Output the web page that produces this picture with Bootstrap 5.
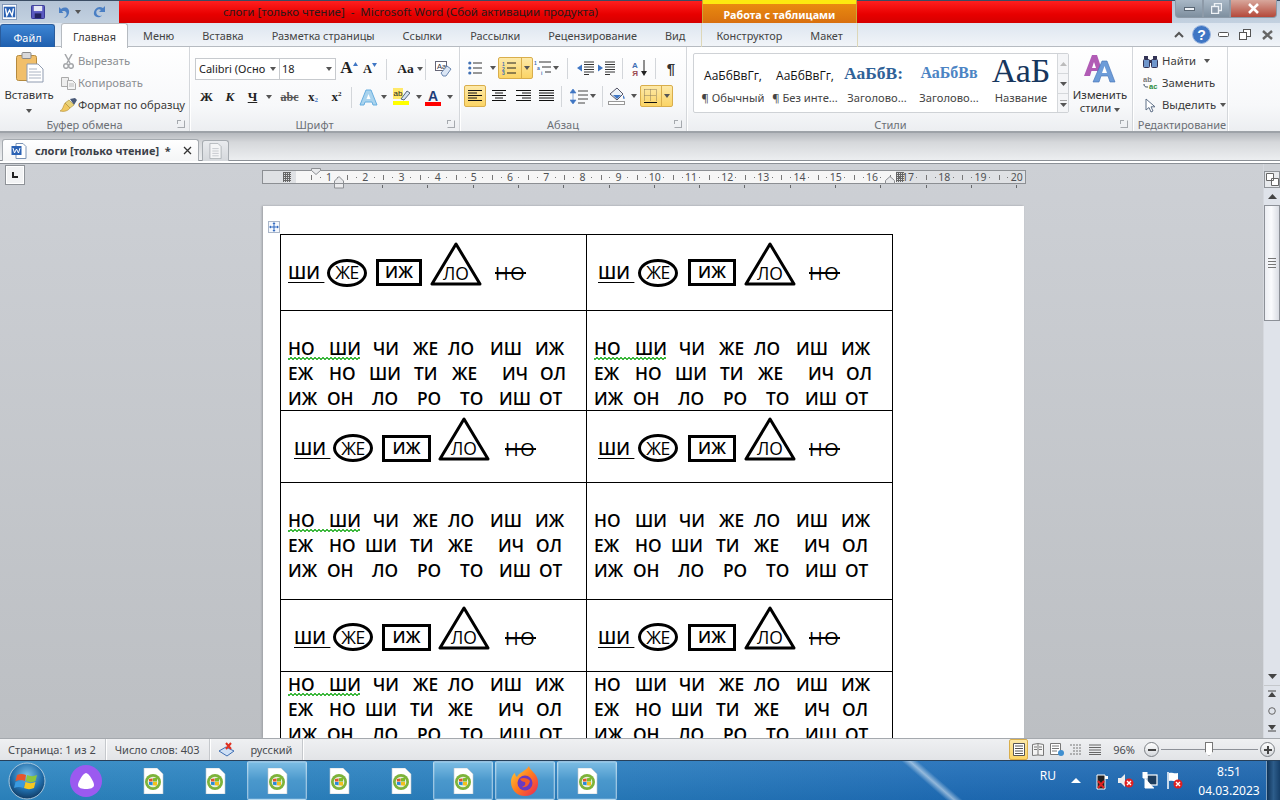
<!DOCTYPE html>
<html lang="ru">
<head>
<meta charset="utf-8">
<title>слоги [только чтение] - Microsoft Word</title>
<link href="https://cdn.jsdelivr.net/npm/bootstrap@5.3.0/dist/css/bootstrap.min.css" rel="stylesheet">
<style>
html,body{height:800px;overflow:hidden}
body{font:11.3px/1.2 "Noto Sans","Open Sans",sans-serif;color:#3b3b3b;background:#c9ccd1;width:1280px}
svg{display:block;flex:none}
.titlebar{height:23px;background:linear-gradient(#3a4c63 0 1px,#b3c3d6 1px,#c3d1e0);flex:none}
.qa{width:119px;gap:0}
.wbox{margin:1px 2px 0 2px}
.qsep{height:14px;background:#8c9aac;width:1px}
.redbar{background:linear-gradient(#ff1f1f,#e80000 60%,#d50000);height:22px;margin-top:1px;color:#2a1a1a;font-size:11.5px}
.redl{width:583px;text-align:center;line-height:22px;white-space:pre}
.redr{width:315px}
.ctx{width:155px;height:23px;background:linear-gradient(#fde910 0 4px,#e98a10 4px,#d86f0e);border-left:1px solid #c9a73a;border-right:1px solid #c9a73a;color:#fff;font-weight:700;font-size:10.8px;text-align:center;line-height:29px}
.winbtns{width:108px;padding:0 3px 0 3px}
.winbtns>div{height:18px;border:1px solid #8d9aa8;border-top:0;display:flex;align-items:center;justify-content:center}
.wmin{width:28px;border-radius:0 0 0 4px;background:linear-gradient(#a9b8c6,#7e8f9f)}
.wmax{width:27px;background:linear-gradient(#a9b8c6,#7e8f9f)}
.wcl{width:47px;border-radius:0 0 4px 0;background:linear-gradient(#d8a79c,#b4493a)}
.tabsrow{height:24px;background:linear-gradient(#dde6f0,#f1f4f8);border-bottom:1px solid #b6bbc1;flex:none}
.rnav{flex-wrap:nowrap}
.rnav .nav-link{padding:0 14px;height:24px;line-height:26px;color:#444;font-size:10.9px;white-space:nowrap;border:0}
.rnav .nav-link.filetab{background:linear-gradient(#3d85d4,#1f5fae);color:#fff;width:55px;padding:0;text-align:center;border-radius:3px 3px 0 0;margin-right:6px;height:23px;margin-top:1px;border:1px solid #2a5c9c;border-bottom:0}
.rnav .nav-link.hometab{background:#fff;border:1px solid #b6bbc1;border-bottom:0;border-radius:3px 3px 0 0;width:67px;padding:0;text-align:center;height:25px;margin-right:1px;color:#3b3b3b;position:relative}
.rnav .nav-link.ctxfirst{margin-left:2px;border-left:1px solid #ddd7b8;padding-left:14px}
.rnav .nav-link.ctxlast{border-right:1px solid #ddd7b8}
.rightctl{gap:0;padding-right:2px}
.rightctl>div{width:22px;display:flex;justify-content:center;align-items:center}
.ribbon{height:86px;background:linear-gradient(#fff,#f7f8fa 70%,#eceef1);border-bottom:2px solid #9da2a8;flex:none}
.rg{border-right:1px solid #d4d7db;box-shadow:1px 0 0 #fff;height:84px;position:relative;flex:none;display:flex;flex-direction:column}
.rb{height:70px;flex:none}
.rl{text-align:center;color:#6b6f75;line-height:14px;font-size:11px;margin-top:1px;padding-right:20px}
.rl2{margin-left:-18px;padding-right:20px}
.rl3{padding-right:0;margin-left:4px}
.launch{position:absolute;right:4px;bottom:3px;width:8px;height:8px;border:1px solid #a5a9ae;border-top-color:transparent;border-left-color:transparent}
.launch:before{content:"";position:absolute;left:-1px;top:-1px;width:4px;height:4px;border:1px solid #a5a9ae;border-right:0;border-bottom:0}
.g1{width:190px}.g2{width:270px}.g3{width:227px}.g4{width:446px}.g5{width:95px}
.paste{width:58px;text-align:center;padding-top:5px;color:#333}
.paste svg{margin:0 auto 5px 16px}
.drop{width:0;height:0;border:3px solid transparent;border-top:4px solid #555;border-bottom:0;display:inline-block;flex:none}
.smallcol{padding-top:3px}
.smi{height:22px;display:flex;align-items:center;white-space:nowrap}
.smi .ic{width:20px;display:flex;justify-content:center;flex:none}
.muted{color:#8c8f93}
.combo{height:22px;background:#fff;border:1px solid #c7cace;display:flex;align-items:center;padding:0 3px;justify-content:space-between;font-size:11px;color:#222;white-space:nowrap;overflow:hidden}
.gridrow{display:grid;align-items:center;justify-items:center}
.gridrow>div{display:flex;align-items:center;justify-content:center;gap:5px;height:22px}
.fr1{grid-template-columns:85px 56px 5px 16px 5px 16px 8px 1px 8px 30px 1px 9px 18px;margin:11px 0 6px 5px}
.fr2{grid-template-columns:23px 24px 36px 23px 24px 23px 6px 38px 30px 34px;margin-left:5px}
.fr1>.combo{justify-self:stretch;justify-content:space-between;gap:0}
.vs{width:1px;height:21px;background:#d3d6da}
.gridrow>.vs{height:21px}
.ser{font-family:"Liberation Serif",serif;color:#222;font-weight:700}
.pr1{grid-template-columns:33px 35px 26px 16px 20px 22px 10px 23px 10px 22px;margin:10px 0 6px 5px}
.pr2{grid-template-columns:22px 26px 23px 22px 8px 35px 5px 35px 33px;margin-left:4px}
.on{background:linear-gradient(#fde9a8,#fbd465);border:1px solid #d9ae4c;border-radius:2px}
.gridrow>.on{height:22px}
.splitd{border-left:1px solid #d9ae4c;height:100%;width:11px;display:flex;align-items:center;justify-content:center}
.gal{width:376px;height:60px;margin:6px 0 0 6px;background:#fff;border:1px solid #cfd2d6;border-radius:2px;padding-left:3px;overflow:hidden;flex:none}
.sty{width:72px;text-align:center;flex:none;overflow:hidden}
.sprev{height:34px;display:flex;align-items:center;justify-content:center;white-space:nowrap;overflow:hidden;color:#111;font:12px "Open Sans",sans-serif;padding-top:8px}
.sname{line-height:15px;white-space:nowrap;font-size:11.2px;color:#444;margin-top:2px}
.s3{font:700 17.5px "Liberation Serif",serif;color:#2f6298;padding-top:4px;justify-content:flex-start;padding-left:3px}
.s4{font:700 16px "Liberation Serif",serif;color:#4c84c4;padding-top:4px}
.s5{font:34px/1 "Liberation Serif",serif;color:#17365d;padding-top:0;overflow:visible}
.gscr{width:14px;margin-left:auto;background:#f4f5f7;border-left:1px solid #d5d8db}
.gscr>div{height:20px;display:flex;align-items:center;justify-content:center;border-bottom:1px solid #d5d8db}
.chg{width:62px;text-align:center;padding-top:8px;color:#333}
.chg svg{margin:0 auto 5px}
.doctabs{height:28px;background:linear-gradient(#b6b9be,#d6d8db 35%,#eceef0);padding:6px 0 0 2px;flex:none;border-bottom:1px solid #8c9197}
.dtab{width:197px;height:22px;background:linear-gradient(#fff,#f4f5f6);border:1px solid #a6abb0;border-bottom:0;border-radius:3px 3px 0 0;font-weight:700;font-size:11px;color:#3b4048;padding:0 6px 0 8px}
.dnew{width:27px;height:21px;margin:1px 0 0 3px;background:linear-gradient(#e9ebee,#d5d8dc);border:1px solid #a6abb0;border-bottom:0;border-radius:3px 3px 0 0}
.topline{height:3px;background:#fff;border-bottom:1px solid #8c9197;flex:none}
.work{min-height:0;background:linear-gradient(#cdd0d5,#bcbfc3);overflow:hidden}
.view{width:1263px;overflow:hidden;flex:none}
.rulerrow{height:24px;padding-top:6px;flex:none}
.tabsel{width:20px;height:20px;margin:-5px 0 0 5px;background:#f2f3f4;border:1px solid #8f9398;box-shadow:inset 0 0 0 1px #fff;flex:none}
.tabsel i{display:block;width:6px;height:6px;border-left:2px solid #222;border-bottom:2px solid #222;margin:6px 0 0 6px}
.rwrap{margin-left:237px;width:764px;position:relative;height:18px;flex:none}
.rwrap:after{content:"";position:absolute;left:0;right:0;top:15px;height:3px;background:repeating-linear-gradient(90deg,transparent 0 30px,#66686b 30px 31px,transparent 31px 45.3px) 90px 0}
.ruler{height:14px;width:764px;background:linear-gradient(#dfe1e4,#dfe1e4) 0 0/33px 100% no-repeat,linear-gradient(#dfe1e4,#dfe1e4) 633px 0/131px 100% no-repeat,#f6f6f6;border:1px solid #8c8f93;display:flex;padding-left:48px;overflow:hidden;position:relative;z-index:1}
.rn{width:36.2px;flex:none;text-align:center;line-height:12px;font-size:10.5px;color:#4f5155;background:linear-gradient(#777,#777) 0 50%/1px 5px no-repeat,linear-gradient(#777,#777) 25% 50%/1px 1px no-repeat,linear-gradient(#777,#777) 75% 50%/1px 1px no-repeat}
.ind{position:absolute;z-index:2}
.hatch{position:absolute;z-index:2;top:2px;width:8px;height:10px;background:repeating-linear-gradient(90deg,#666 0 1px,transparent 1px 2px),repeating-linear-gradient(#666 0 1px,transparent 1px 2px)}
.page{margin:18px 0 0 263px;width:761px;height:532px;background:#fff;padding:28px 0 0 17px;position:relative;overflow:hidden;box-shadow:-1px 0 2px #9a9da1;flex:none}
.mvh{position:absolute;left:5px;top:15px;width:12px;height:12px;border:1px solid #aab6c8;background:#f5f8fd;display:flex;align-items:center;justify-content:center}
.sheet{width:613px;table-layout:fixed;border-collapse:collapse;font:600 17.3px/25px "Open Sans",sans-serif;color:#000}
.sheet td{border:1px solid #000;padding:0;vertical-align:top;overflow:hidden}
.sheet td.p25{padding-top:25px}
.sheet td.p25 .l3{margin-bottom:-1px}
.sheet col{width:306px}
.sh1{height:76px}.sh2{height:100px}.sh3{height:72px}.sh4{height:117px}.sh5{height:72px}.sh6{height:80px}
.sym{display:grid;align-items:center;justify-items:start;height:100%}
.sh1 .sym{height:75px}
.sh3 .sym,.sh5 .sym{height:71px;padding-top:3px}
.va{grid-template-columns:39px 49px 54px 65px auto;padding-left:7px}
.vb{grid-template-columns:40px 50px 56px 65px auto;padding-left:11px}
.vc{grid-template-columns:39px 49px 56px 67px auto;padding-left:13px}
.sym u{text-underline-offset:3px;text-decoration-thickness:1px;white-space:pre}
.oval{width:40px;height:28px;border:3px solid #000;border-radius:50%;display:flex;align-items:center;justify-content:center;font-weight:500;font-size:17.5px;letter-spacing:-.4px}
.bx{height:27px;border:3px solid #000;display:flex;align-items:center;justify-content:center;font-size:16.5px;font-weight:600;line-height:1}
.va .bx{width:46px}.vb .bx{width:48px}.vc .bx{width:49px}
.tri{margin-bottom:18px;width:52px;height:44px}
.tri text{font:500 17.5px "Open Sans",sans-serif}
.sym s{font-weight:500;text-decoration-thickness:2px;font-size:18.5px;letter-spacing:1.5px}
.syl{display:grid;justify-items:start;white-space:nowrap;padding-left:7px;position:relative}
.l1{grid-template-columns:41px 44px 40px 35px 42px 45px auto}
.l2{grid-template-columns:41px 40px 45px 38px 50px 38px auto}
.l2b{grid-template-columns:41px 36px 45px 38px 50px 38px auto}
.l3{grid-template-columns:39px 45px 45px 43px 39px 40px auto}
.wavy:after{content:"";position:absolute;left:7px;top:21px;width:72px;height:3px;background:linear-gradient(135deg,transparent 40%,#3eb83e 40% 60%,transparent 60%) 0 0/4px 3px,linear-gradient(45deg,transparent 40%,#3eb83e 40% 60%,transparent 60%) 2px 0/4px 3px}
.vscroll{width:17px;background:#dfe3ea;flex:none;border-left:1px solid #d5d8de;padding-bottom:2px}
.vruler{height:24px;padding-top:7px;background:#cdd0d5;flex:none}
.vbtn{width:16px;height:17px;border:1px solid #8f9398;background:#e8eaed;display:flex;align-items:center;justify-content:center}
.varr{height:17px;display:flex;align-items:center;justify-content:center;flex:none}
.thumb{height:116px;width:16px;background:linear-gradient(90deg,#eceef3,#fafbfd 45%,#d9dce3);border:1px solid #8d9198;display:flex;flex-direction:column;align-items:center;justify-content:center;gap:2px;flex:none}
.thumb i{display:block;width:8px;height:1px;background:#777}
.status{height:22px;background:linear-gradient(#eff0f2,#e2e4e7);border-top:1px solid #a5a9ae;flex:none;color:#474a4f;font-size:11px}
.st{padding:0 9px;border-right:1px solid #c5c8cc;height:100%;display:flex;align-items:center;box-shadow:1px 0 0 #fff;white-space:nowrap;flex:none}
.st1{padding-left:8px}
.st3{width:93px;padding-left:8px}
.zm{padding-right:5px;flex:none}
.vw{width:19px;height:21px;display:flex;align-items:center;justify-content:center;flex:none}
.pct{width:23px;text-align:right;margin:0 9px 0 8px;flex:none}
.slider{width:97px;height:1px;background:#8d9198;position:relative;flex:none;margin:0 2px}
.slider i{position:absolute;left:44px;top:-7px;width:8px;height:14px;background:#fff;border:1px solid #777;clip-path:polygon(0 0,100% 0,100% 70%,50% 100%,0 70%)}
.zbtn{width:15px;height:15px;border:1px solid #7c8085;border-radius:50%;background:linear-gradient(#fff,#d5d8dc);position:relative;flex:none}
.zbtn:before{content:"";position:absolute;left:2.5px;right:2.5px;top:5.5px;height:2px;background:#444}
.zplus:after{content:"";position:absolute;top:2.5px;bottom:2.5px;left:5.5px;width:2px;background:#444}
.taskbar{height:40px;border-top:1px solid #27405a;background:linear-gradient(41deg,transparent 44%,rgba(255,255,255,.5) 50%,transparent 56%) 885px 0/95px 40px no-repeat,linear-gradient(rgba(255,255,255,.08),rgba(0,0,0,.05)),linear-gradient(90deg,#2c86c2,#2a80c0 40%,#1e6db8 75%,#1c65ae);color:#fff;flex:none}
.orb{width:52px;padding-left:8px;flex:none}
.tk{width:62px;height:39px;display:flex;align-items:center;justify-content:center;flex:none}
.alice{width:68px;margin-right:2px}
.tk.act{background:linear-gradient(#7dbde4,#4a98cc 50%,#3f8dc6);border:1px solid rgba(255,255,255,.45);border-radius:2px;box-shadow:inset 0 0 0 1px rgba(255,255,255,.15)}
.tka{width:60px;margin:0 1px}
.tray{margin-left:auto;height:39px}
.ru{font-size:12px;margin:0 15px 8px 0}
.up{margin-right:13px}
.clock{width:74px;text-align:center;font:12px/19px "Noto Sans",sans-serif}
.showd{width:14px;height:39px;background:linear-gradient(90deg,#0f3358,#2d5d8b 50%,#163f69);border-left:1px solid #7fa0bf}
</style>
</head>
<body class="d-flex flex-column">
<svg width="0" height="0" class="position-absolute">
<defs>
<symbol id="tdoc" viewBox="0 0 24 26"><path d="M3 0h13l6 6v20H3z" fill="#fff" stroke="#bcc6cc" stroke-width=".6"/><circle cx="12" cy="14" r="8" fill="#7db33a"/><circle cx="12" cy="14" r="5.3" fill="#e8efe0"/><path d="M8 11l3.6-.6v3.2H8z" fill="#e2562a"/><path d="M12 10.3l4-.6v3.9h-4z" fill="#7cba2a"/><path d="M8 14h3.6v3.2L8 16.7z" fill="#2a8ad8"/><path d="M12 14h4v3.8l-4-.6z" fill="#f4c01e"/></symbol>
<symbol id="ldoc" viewBox="0 0 16 20"><path d="M1 .5h10l4 4v15H1z" fill="#f4f5f6" stroke="#a6abb0"/><path d="M4 7h8M4 10h8M4 13h8M4 16h8" stroke="#bcc0c5"/></symbol>
<symbol id="triangle" viewBox="0 0 52 44"><path d="M26 2L2 42h48z" fill="none" stroke="#000" stroke-width="3" stroke-linejoin="round"/></symbol>
</defs>
</svg>

<header class="titlebar d-flex">
  <div class="qa d-flex align-items-center">
    <svg class="wbox" width="15" height="16" viewBox="0 0 17 18"><rect x=".5" y=".5" width="16" height="17" fill="#fff" stroke="#7b93b5"/><rect x="2" y="3" width="13" height="12" fill="#2b62b4"/><path d="M4 5l1.500 8 3-6 3 6L13 5" fill="none" stroke="#fff" stroke-width="1.600"/></svg>
    <div class="qsep ms-1 me-2"></div>
    <svg width="14" height="14" viewBox="0 0 15 15" class="me-2"><rect x=".5" y=".5" width="14" height="14" rx="1" fill="#5a5ac0" stroke="#323290"/><rect x="3" y="1" width="9" height="5.500" fill="#e6e8f4"/><rect x="4" y="9" width="7" height="5" fill="#23235e"/></svg>
    <svg width="14" height="14" viewBox="0 0 14 14" class="ms-1"><path d="M2 8V2l2 2c4-3 9-1 8 4-.5 3-3 5-5 5 2-1.500 3-3 2.500-5-.6-2-3-2.500-4.500-1.500L6.500 8z" fill="#4a7fc4"/></svg>
    <span class="drop ms-1 me-2"></span>
    <svg width="14" height="14" viewBox="0 0 14 14" class="ms-1"><path d="M12 1v6H6l2-2C5 3 2.500 6 3.500 8.500 4 10.500 6.500 11.500 9 10.500 7 13 2.500 13 1 9.500 0 5 5-.5 10 3z" fill="#4a7fc4"/></svg>
    <div class="qsep ms-2"></div>
    <div class="ms-2"><div style="width:7px;height:1px;background:#222;margin-bottom:2px"></div><span class="drop d-block"></span></div>
  </div>
  <div class="redbar redl">слоги [только чтение]  -  Microsoft Word (Сбой активации продукта)</div>
  <div class="ctx">Работа с таблицами</div>
  <div class="redbar redr"></div>
  <div class="winbtns d-flex">
    <div class="wmin"><svg width="11" height="4"><rect x=".5" y=".5" width="10" height="3" fill="#eef2f6" stroke="#5a6774"/></svg></div>
    <div class="wmax"><svg width="11" height="11"><rect x="3.500" y=".5" width="7" height="7" fill="none" stroke="#eef2f6" stroke-width="1.400"/><rect x=".5" y="3.500" width="7" height="7" fill="#8c9aaa" stroke="#eef2f6" stroke-width="1.400"/></svg></div>
    <div class="wcl"><svg width="13" height="11" viewBox="0 0 13 11"><path d="M2 1l9 9M11 1l-9 9" stroke="#fff" stroke-width="2.600"/></svg></div>
  </div>
</header>

<div class="tabsrow d-flex justify-content-between">
  <ul class="nav rnav">
    <li class="nav-item"><a class="nav-link filetab" href="#">Файл</a></li>
    <li class="nav-item"><a class="nav-link hometab" href="#">Главная</a></li>
    <li class="nav-item"><a class="nav-link" href="#">Меню</a></li>
    <li class="nav-item"><a class="nav-link" href="#">Вставка</a></li>
    <li class="nav-item"><a class="nav-link" href="#">Разметка страницы</a></li>
    <li class="nav-item"><a class="nav-link" href="#">Ссылки</a></li>
    <li class="nav-item"><a class="nav-link" href="#">Рассылки</a></li>
    <li class="nav-item"><a class="nav-link" href="#">Рецензирование</a></li>
    <li class="nav-item"><a class="nav-link" href="#">Вид</a></li>
    <li class="nav-item"><a class="nav-link ctxfirst" href="#">Конструктор</a></li>
    <li class="nav-item"><a class="nav-link ctxlast" href="#">Макет</a></li>
  </ul>
  <div class="rightctl d-flex align-items-center">
    <div><svg width="10" height="7" viewBox="0 0 10 7"><path d="M1 6l4-4 4 4" fill="none" stroke="#555" stroke-width="2"/></svg></div>
    <div><svg width="19" height="19" viewBox="0 0 19 19"><circle cx="9.500" cy="9.500" r="9" fill="#3f76c4" stroke="#9db7de"/><text x="9.500" y="14.500" text-anchor="middle" fill="#fff" font-family="Liberation Sans" font-weight="700" font-size="14">?</text></svg></div>
    <div><svg width="11" height="5"><rect x=".5" y=".5" width="10" height="4" rx="1" fill="#fff" stroke="#555"/></svg></div>
    <div><svg width="12" height="11"><rect x="4.500" y=".5" width="7" height="7" fill="#fff" stroke="#555"/><rect x=".5" y="3.500" width="7" height="7" fill="#fff" stroke="#555"/></svg></div>
    <div><svg width="11" height="10" viewBox="0 0 11 10"><path d="M1 1l9 8M10 1L1 9" stroke="#666" stroke-width="2.400"/></svg></div>
  </div>
</div>

<section class="ribbon d-flex">
  <div class="rg g1">
    <div class="rb d-flex">
      <div class="paste">
        <svg width="28" height="31" viewBox="0 0 28 31"><rect x=".5" y="3.500" width="20" height="25" rx="2" fill="#f1bf6a" stroke="#b58a3e"/><rect x="6" y=".5" width="9" height="6" rx="1" fill="#d8d8da" stroke="#8b8b8b"/><path d="M11 12h11l5 5v13H11z" fill="#fff" stroke="#8f9bb0"/><path d="M13 17h8M13 20h12M13 23h12M13 26h12" stroke="#aab3c2"/></svg>
        <div>Вставить</div>
        <span class="drop"></span>
      </div>
      <div class="smallcol">
        <div class="smi muted"><span class="ic"><svg width="11" height="15" viewBox="0 0 11 15"><path d="M2 0l5 9M9 0L4 9" stroke="#a4a6a9" stroke-width="1.500"/><circle cx="3" cy="12" r="2.300" fill="none" stroke="#a4a6a9" stroke-width="1.500"/><circle cx="8" cy="12" r="2.300" fill="none" stroke="#a4a6a9" stroke-width="1.500"/></svg></span>Вырезать</div>
        <div class="smi muted"><span class="ic"><svg width="15" height="13" viewBox="0 0 15 13"><path d="M.5.5h7v9h-7z" fill="#eee" stroke="#aaa"/><path d="M6.500 3.500h5l3 3v6h-8z" fill="#f4f4f4" stroke="#aaa"/><path d="M8 7h5M8 9h5" stroke="#bbb"/></svg></span>Копировать</div>
        <div class="smi"><span class="ic"><svg width="17" height="14" viewBox="0 0 17 14"><path d="M10 1l5-1 2 2-3 5z" fill="#4a5a78"/><path d="M9 2l5 5-4 3-5-5z" fill="#e8d27a" stroke="#a58d3a" stroke-width=".6"/><path d="M5 5l5 5c-2 3-6 4-10 3 3-1 3-5 5-8z" fill="#f0c860" stroke="#b08a30" stroke-width=".6"/></svg></span>Формат по образцу</div>
      </div>
    </div>
    <div class="rl">Буфер обмена</div><span class="launch"></span>
  </div>
  <div class="rg g2">
    <div class="rb">
      <div class="gridrow fr1">
        <div class="combo"><span>Calibri (Осно</span><span class="drop"></span></div>
        <div class="combo" style="padding-left:2px;border-left:0"><span>18</span><span class="drop"></span></div>
        <i></i>
        <div class="ser" style="font-size:17px;gap:0;align-items:flex-start">A<svg width="5" height="4" class="mt-1"><path d="M0 4l2.500-4 2.500 4z" fill="#3f76c4"/></svg></div>
        <i></i>
        <div class="ser" style="font-size:12.5px;gap:0;align-items:center">A<svg width="5" height="4" class="mb-2"><path d="M0 0l2.500 4 2.500-4z" fill="#3f76c4"/></svg></div>
        <i></i><div class="vs"></div><i></i>
        <div class="ser" style="font-size:13.5px;gap:3px">Aa<span class="drop"></span></div>
        <div class="vs"></div><i></i>
        <div><svg width="18" height="16" viewBox="0 0 18 16"><rect x=".5" y=".5" width="11" height="9" fill="#fff" stroke="#667"/><text x="2" y="8" font-family="Liberation Sans" font-size="7.500" fill="#334">Aa</text><path d="M6 12l6-7 4 3-5 7H8z" fill="#dbe6f5" stroke="#6a87b0"/></svg></div>
      </div>
      <div class="gridrow fr2">
        <div class="ser" style="font-size:13px">Ж</div>
        <div class="ser fst-italic" style="font-size:13px">К</div>
        <div class="ser" style="font-size:13px"><u>Ч</u><span class="drop ms-1"></span></div>
        <div class="ser" style="font-size:12px"><s style="color:#555">abc</s></div>
        <div class="ser" style="font-size:13px;gap:0">x<sub style="font-size:7px;color:#3f76c4;bottom:-.4em">2</sub></div>
        <div class="ser" style="font-size:13px;gap:0">x<sup style="font-size:7px;top:-.5em">2</sup></div>
        <div class="vs"></div>
        <div style="gap:3px"><svg width="19" height="18" viewBox="0 0 19 18"><path d="M7 2h5l6 15h-4l-1-3H6l-1 3H1z" fill="#a9d3ee" stroke="#67aee0"/><path d="M9.500 6l-2 5h4z" fill="#fff"/></svg><span class="drop"></span></div>
        <div style="gap:6px"><svg width="17" height="18" viewBox="0 0 17 18"><rect x="0" y="13" width="16" height="4" fill="#ff0"/><rect x="0" y="0" width="10" height="11" fill="#ffe96a"/><text x=".5" y="8" font-family="Liberation Sans" font-size="8" fill="#222">ab</text><path d="M8 11l6-8 3 2-6 7z" fill="#d4e2f4" stroke="#567"/></svg><span class="drop"></span></div>
        <div style="gap:6px"><svg width="16" height="17" viewBox="0 0 16 17"><rect y="13" width="16" height="4" fill="#f00"/><text x="8" y="12" text-anchor="middle" font-family="Liberation Sans" font-weight="700" font-size="14" fill="#1f3d78">A</text></svg><span class="drop"></span></div>
      </div>
    </div>
    <div class="rl">Шрифт</div><span class="launch"></span>
  </div>
  <div class="rg g3">
    <div class="rb">
      <div class="gridrow pr1">
        <div style="gap:8px"><svg width="14" height="14" viewBox="0 0 14 14"><path d="M5 2h9M5 7h9M5 12h9" stroke="#333"/><circle cx="1.800" cy="2" r="1.600" fill="#3f6fb4"/><circle cx="1.800" cy="7" r="1.600" fill="#3f6fb4"/><circle cx="1.800" cy="12" r="1.600" fill="#3f6fb4"/></svg><span class="drop"></span></div>
        <div class="on" style="gap:0;width:35px;justify-content:flex-end"><svg width="15" height="14" viewBox="0 0 15 14" class="me-1"><path d="M5 2h9M5 7h9M5 12h9" stroke="#222"/><text x="0" y="5" font-size="5" font-family="Liberation Sans" font-weight="700" fill="#3f6fb4">1</text><text x="0" y="9.500" font-size="5" font-family="Liberation Sans" font-weight="700" fill="#3f6fb4">2</text><text x="0" y="14" font-size="5" font-family="Liberation Sans" font-weight="700" fill="#3f6fb4">3</text></svg><span class="splitd"><span class="drop"></span></span></div>
        <div style="gap:1px"><svg width="18" height="16" viewBox="0 0 18 16"><path d="M5 2h12M8 7h9M11 12h6" stroke="#333"/><text x="0" y="4.500" font-size="5" font-family="Liberation Sans" font-weight="700" fill="#3f6fb4">1</text><text x="3" y="9.500" font-size="5" font-family="Liberation Sans" font-weight="700" fill="#3f6fb4">a</text><text x="7" y="15" font-size="5" font-family="Liberation Sans" font-weight="700" fill="#3f6fb4">i</text></svg><span class="drop"></span></div>
        <div class="vs"></div>
        <div><svg width="17" height="14" viewBox="0 0 17 14"><path d="M7 1h10M7 3.500h10M7 6h10M7 8.500h10M7 11h10M7 13.500h5" stroke="#333"/><path d="M0 7l5-3.500v7z" fill="#3f76c4"/></svg></div>
        <div><svg width="17" height="14" viewBox="0 0 17 14"><path d="M7 1h10M7 3.500h10M7 6h10M7 8.500h10M7 11h10M7 13.500h5" stroke="#333"/><path d="M5 7L0 3.500v7z" fill="#3f76c4"/></svg></div>
        <div class="vs"></div>
        <div style="gap:1px"><svg width="10" height="16" viewBox="0 0 10 16"><text x="5" y="7.500" text-anchor="middle" font-size="8" font-weight="700" font-family="Liberation Sans" fill="#3f6fb4">А</text><text x="5" y="15.500" text-anchor="middle" font-size="8" font-weight="700" font-family="Liberation Sans" fill="#9a4a50">Я</text></svg><svg width="6" height="16" viewBox="0 0 6 16"><path d="M3 0v13" stroke="#222"/><path d="M0 11l3 5 3-5z" fill="#222"/></svg></div>
        <div class="vs"></div>
        <div class="ser" style="font:700 15px 'Liberation Sans',sans-serif;color:#333">¶</div>
      </div>
      <div class="gridrow pr2">
        <div class="on" style="width:22px"><svg width="14" height="12" viewBox="0 0 14 12"><path d="M0 .5h14M0 3h9M0 5.500h14M0 8h9M0 10.500h14" stroke="#111"/></svg></div>
        <div><svg width="14" height="12" viewBox="0 0 14 12"><path d="M0 .5h14M3 3h8M0 5.500h14M3 8h8M0 10.500h14" stroke="#111"/></svg></div>
        <div><svg width="15" height="12" viewBox="0 0 15 12"><path d="M0 .5h15M6 3h9M0 5.500h15M6 8h9M0 10.500h15" stroke="#111"/></svg></div>
        <div><svg width="15" height="12" viewBox="0 0 15 12"><path d="M0 .5h15M0 3h15M0 5.500h15M0 8h15M0 10.500h15" stroke="#111"/></svg></div>
        <div class="vs"></div>
        <div style="gap:2px"><svg width="18" height="15" viewBox="0 0 18 15"><path d="M8 2h10M8 6h10M8 10h10M8 14h7" stroke="#444"/><path d="M3 0l3 4H0zM3 15l3-4H0zM3 4v7" fill="#3f76c4" stroke="#3f76c4" stroke-width=".6"/></svg><span class="drop"></span></div>
        <div class="vs"></div>
        <div style="gap:5px"><svg width="18" height="18" viewBox="0 0 18 18"><path d="M2 7l7-6 6 6-6 6z" fill="#eef3f9" stroke="#556"/><path d="M5 8h8l-4 4z" fill="#3f76c4"/><path d="M15 8c2 2 2 4 1 4s-1-2-1-4z" fill="#3f76c4"/><rect x=".5" y="14.500" width="16" height="3" fill="#fff" stroke="#999"/></svg><span class="drop"></span></div>
        <div class="on" style="width:33px;gap:0;justify-content:flex-end"><svg width="13" height="14" viewBox="0 0 13 14" class="me-1"><path d="M.5.500v12M6.500.500v12M12.500.500v12M.5.500h12M.5 6.500h12" stroke="#8a7a5a" stroke-dasharray="1 1"/><path d="M0 13.500h13" stroke="#111"/></svg><span class="splitd"><span class="drop"></span></span></div>
      </div>
    </div>
    <div class="rl">Абзац</div><span class="launch"></span>
  </div>
  <div class="rg g4">
    <div class="rb d-flex">
      <div class="gal d-flex">
        <div class="sty"><div class="sprev">АаБбВвГг,</div><div class="sname">¶ Обычный</div></div>
        <div class="sty"><div class="sprev">АаБбВвГг,</div><div class="sname">¶ Без инте...</div></div>
        <div class="sty"><div class="sprev s3">АаБбВ:</div><div class="sname">Заголово...</div></div>
        <div class="sty"><div class="sprev s4">АаБбВв</div><div class="sname">Заголово...</div></div>
        <div class="sty"><div class="sprev s5">АаБ</div><div class="sname">Название</div></div>
        <div class="gscr">
          <div><svg width="7" height="4"><path d="M0 4l3.500-4 3.500 4z" fill="#bbb"/></svg></div>
          <div><svg width="7" height="4"><path d="M0 0l3.500 4 3.500-4z" fill="#555"/></svg></div>
          <div><svg width="7" height="7"><path d="M0 0h7" stroke="#555"/><path d="M0 3l3.500 4 3.500-4z" fill="#555"/></svg></div>
        </div>
      </div>
      <div class="chg">
        <svg width="32" height="28" viewBox="0 0 32 28"><path d="M8 0h5l7 21h-5l-1.500-5h-6L6 21H0z" fill="#b15cb5"/><path d="M10 7l-2 6h4z" fill="#fff"/><path d="M18 6h5l8 21h-5l-2-6h-7l-2 6H9z" fill="#6d9cd8" stroke="#3f6fb4" stroke-width=".6"/><path d="M20.500 11l-2.500 7h5z" fill="#fff"/></svg>
        <div style="line-height:13px">Изменить</div>
        <div style="line-height:13px">стили <span class="drop"></span></div>
      </div>
    </div>
    <div class="rl rl2">Стили</div><span class="launch"></span>
  </div>
  <div class="rg g5">
    <div class="rb ps-2 smallcol">
      <div class="smi" style="padding-left:2px"><span class="ic" style="margin-right:4px;width:15px"><svg width="15" height="13" viewBox="0 0 15 13"><rect x="1" y="1" width="4" height="3" fill="#335"/><rect x="10" y="1" width="4" height="3" fill="#335"/><rect x=".5" y="4.500" width="6" height="8" rx="1" fill="#6f96cc" stroke="#335"/><rect x="8.500" y="4.500" width="6" height="8" rx="1" fill="#6f96cc" stroke="#335"/><rect x="6" y="5" width="3" height="3" fill="#335"/></svg></span>Найти<span class="drop ms-2"></span></div>
      <div class="smi" style="padding-left:2px"><span class="ic" style="margin-right:4px;width:15px"><svg width="15" height="14" viewBox="0 0 15 14"><text x="0" y="6" font-family="Liberation Sans" font-weight="700" font-size="7.500" fill="#777">ab</text><text x="6" y="13" font-family="Liberation Sans" font-weight="700" font-size="7.500" fill="#2a8a3a">ac</text><path d="M1 8c0 3 2 3 4 3" fill="none" stroke="#345"/></svg></span>Заменить</div>
      <div class="smi" style="padding-left:2px"><span class="ic" style="margin-right:4px;width:15px"><svg width="11" height="15" viewBox="0 0 11 15"><path d="M1 1v11l3-2.500 2 4.500 2-1-2-4.200h4z" fill="#fff" stroke="#5f7088"/></svg></span>Выделить<span class="drop ms-1"></span></div>
    </div>
    <div class="rl rl3">Редактирование</div>
  </div>
</section>

<div class="doctabs d-flex align-items-start">
  <div class="dtab d-flex align-items-center justify-content-between">
    <span class="d-flex align-items-center"><svg width="16" height="16" viewBox="0 0 16 16" class="me-2"><path d="M5 .5h7l3 3v12H5z" fill="#fff" stroke="#7b93b5"/><rect x=".5" y="3" width="10" height="9" fill="#2b62b4"/><path d="M2 5l1.500 5 2-4 2 4L9 5" fill="none" stroke="#fff"/></svg>слоги [только чтение]&nbsp;&nbsp;*</span>
    <svg width="9" height="9" viewBox="0 0 9 9"><path d="M1 1l7 7M8 1L1 8" stroke="#333" stroke-width="1.300"/></svg>
  </div>
  <div class="dnew d-flex align-items-center justify-content-center"><svg width="13" height="16"><use href="#ldoc"/></svg></div>
</div>
<div class="topline"></div>

<main class="work d-flex flex-grow-1">
  <div class="view d-flex flex-column">
    <div class="rulerrow d-flex">
      <div class="tabsel"><i></i></div>
      <div class="rwrap">
        <div class="ruler">
          <span class="rn">1</span><span class="rn">2</span><span class="rn">3</span><span class="rn">4</span><span class="rn">5</span><span class="rn">6</span><span class="rn">7</span><span class="rn">8</span><span class="rn">9</span><span class="rn">10</span><span class="rn">11</span><span class="rn">12</span><span class="rn">13</span><span class="rn">14</span><span class="rn">15</span><span class="rn">16</span><span class="rn">17</span><span class="rn">18</span><span class="rn">19</span><span class="rn">20</span>
        </div>
        <span class="hatch" style="left:21px"></span>
        <span class="hatch" style="left:634px"></span>
        <svg class="ind" style="left:49px;top:-2px" width="10" height="7"><path d="M.5.5h9v2l-4.500 4-4.500-4z" fill="#e9eaec" stroke="#8c8f93"/></svg>
        <svg class="ind" style="left:72px;top:6px" width="10" height="13"><path d="M.5 5l4.500-4.500 4.500 4.500v7h-9z" fill="#e9eaec" stroke="#8c8f93"/><path d="M.5 7.500h9" stroke="#8c8f93"/></svg>
        <svg class="ind" style="left:623px;top:6px" width="10" height="8"><path d="M.5 7.500v-3l4.500-4 4.500 4v3z" fill="#e9eaec" stroke="#8c8f93"/></svg>
      </div>
    </div>
    <div class="page">
      <span class="mvh"><svg width="10" height="10" viewBox="0 0 10 10"><path d="M5 0l1.500 2h-1v2.500H8V3.500l2 1.500-2 1.500v-1H5.500V8h1L5 10 3.500 8h1V5.500H2v1L0 5l2-1.500v1h2.500V2h-1z" fill="#2f68c0"/></svg></span>
      <table class="sheet">
        <colgroup><col><col></colgroup>
        <tbody>
          <tr class="sh1">
            <td><div class="sym va"><u>ШИ </u><span class="oval">ЖЕ</span><span class="bx">ИЖ</span><svg class="tri" viewBox="0 0 52 44"><use href="#triangle"/><text x="26" y="38" text-anchor="middle">ЛО</text></svg><s>НО</s></div></td>
            <td><div class="sym vb"><u>ШИ </u><span class="oval">ЖЕ</span><span class="bx">ИЖ</span><svg class="tri" viewBox="0 0 52 44"><use href="#triangle"/><text x="26" y="38" text-anchor="middle">ЛО</text></svg><s>НО</s></div></td>
          </tr>
          <tr class="sh2">
            <td class="p25">
              <div class="syl l1 wavy"><span>НО</span><span>ШИ</span><span>ЧИ</span><span>ЖЕ</span><span>ЛО</span><span>ИШ</span><span>ИЖ</span></div>
              <div class="syl l2"><span>ЕЖ</span><span>НО</span><span>ШИ</span><span>ТИ</span><span>ЖЕ</span><span>ИЧ</span><span>ОЛ</span></div>
              <div class="syl l3"><span>ИЖ</span><span>ОН</span><span>ЛО</span><span>РО</span><span>ТО</span><span>ИШ</span><span>ОТ</span></div>
            </td>
            <td class="p25">
              <div class="syl l1 wavy"><span>НО</span><span>ШИ</span><span>ЧИ</span><span>ЖЕ</span><span>ЛО</span><span>ИШ</span><span>ИЖ</span></div>
              <div class="syl l2"><span>ЕЖ</span><span>НО</span><span>ШИ</span><span>ТИ</span><span>ЖЕ</span><span>ИЧ</span><span>ОЛ</span></div>
              <div class="syl l3"><span>ИЖ</span><span>ОН</span><span>ЛО</span><span>РО</span><span>ТО</span><span>ИШ</span><span>ОТ</span></div>
            </td>
          </tr>
          <tr class="sh3">
            <td><div class="sym vc"><u>ШИ </u><span class="oval">ЖЕ</span><span class="bx">ИЖ</span><svg class="tri" viewBox="0 0 52 44"><use href="#triangle"/><text x="26" y="38" text-anchor="middle">ЛО</text></svg><s>НО</s></div></td>
            <td><div class="sym vb"><u>ШИ </u><span class="oval">ЖЕ</span><span class="bx">ИЖ</span><svg class="tri" viewBox="0 0 52 44"><use href="#triangle"/><text x="26" y="38" text-anchor="middle">ЛО</text></svg><s>НО</s></div></td>
          </tr>
          <tr class="sh4">
            <td class="p25">
              <div class="syl l1 wavy"><span>НО</span><span>ШИ</span><span>ЧИ</span><span>ЖЕ</span><span>ЛО</span><span>ИШ</span><span>ИЖ</span></div>
              <div class="syl l2b"><span>ЕЖ</span><span>НО</span><span>ШИ</span><span>ТИ</span><span>ЖЕ</span><span>ИЧ</span><span>ОЛ</span></div>
              <div class="syl l3"><span>ИЖ</span><span>ОН</span><span>ЛО</span><span>РО</span><span>ТО</span><span>ИШ</span><span>ОТ</span></div>
            </td>
            <td class="p25">
              <div class="syl l1"><span>НО</span><span>ШИ</span><span>ЧИ</span><span>ЖЕ</span><span>ЛО</span><span>ИШ</span><span>ИЖ</span></div>
              <div class="syl l2b"><span>ЕЖ</span><span>НО</span><span>ШИ</span><span>ТИ</span><span>ЖЕ</span><span>ИЧ</span><span>ОЛ</span></div>
              <div class="syl l3"><span>ИЖ</span><span>ОН</span><span>ЛО</span><span>РО</span><span>ТО</span><span>ИШ</span><span>ОТ</span></div>
            </td>
          </tr>
          <tr class="sh5">
            <td><div class="sym vc"><u>ШИ </u><span class="oval">ЖЕ</span><span class="bx">ИЖ</span><svg class="tri" viewBox="0 0 52 44"><use href="#triangle"/><text x="26" y="38" text-anchor="middle">ЛО</text></svg><s>НО</s></div></td>
            <td><div class="sym vb"><u>ШИ </u><span class="oval">ЖЕ</span><span class="bx">ИЖ</span><svg class="tri" viewBox="0 0 52 44"><use href="#triangle"/><text x="26" y="38" text-anchor="middle">ЛО</text></svg><s>НО</s></div></td>
          </tr>
          <tr class="sh6">
            <td>
              <div class="syl l1 wavy"><span>НО</span><span>ШИ</span><span>ЧИ</span><span>ЖЕ</span><span>ЛО</span><span>ИШ</span><span>ИЖ</span></div>
              <div class="syl l2b"><span>ЕЖ</span><span>НО</span><span>ШИ</span><span>ТИ</span><span>ЖЕ</span><span>ИЧ</span><span>ОЛ</span></div>
              <div class="syl l3"><span>ИЖ</span><span>ОН</span><span>ЛО</span><span>РО</span><span>ТО</span><span>ИШ</span><span>ОТ</span></div>
            </td>
            <td>
              <div class="syl l1"><span>НО</span><span>ШИ</span><span>ЧИ</span><span>ЖЕ</span><span>ЛО</span><span>ИШ</span><span>ИЖ</span></div>
              <div class="syl l2b"><span>ЕЖ</span><span>НО</span><span>ШИ</span><span>ТИ</span><span>ЖЕ</span><span>ИЧ</span><span>ОЛ</span></div>
              <div class="syl l3"><span>ИЖ</span><span>ОН</span><span>ЛО</span><span>РО</span><span>ТО</span><span>ИШ</span><span>ОТ</span></div>
            </td>
          </tr>
        </tbody>
      </table>
    </div>
  </div>
  <aside class="vscroll d-flex flex-column">
    <div class="vruler"><div class="vbtn"><svg width="13" height="13" viewBox="0 0 13 13"><path d="M.5.5h7v7h-7zM5.500 5.500h7v7h-7z" fill="#fff" stroke="#666"/></svg></div></div>
    <div class="varr"><svg width="9" height="5"><path d="M0 5l4.500-5 4.500 5z" fill="#444"/></svg></div>
    <div class="thumb"><i></i><i></i><i></i><i></i></div>
    <div class="flex-grow-1"></div>
    <div class="varr"><svg width="9" height="5"><path d="M0 0l4.500 5 4.500-5z" fill="#444"/></svg></div>
    <div class="varr" style="border-top:1px solid #c5c8cc"><svg width="8" height="8"><path d="M0 1h8" stroke="#444"/><path d="M0 7l4-5 4 5z" fill="#444"/></svg></div>
    <div class="varr"><svg width="8" height="8"><circle cx="4" cy="4" r="3.300" fill="none" stroke="#666"/></svg></div>
    <div class="varr"><svg width="8" height="8"><path d="M0 7h8" stroke="#444"/><path d="M0 1l4 5 4-5z" fill="#444"/></svg></div>
  </aside>
</main>

<footer class="status d-flex align-items-center">
  <div class="st st1">Страница: 1 из 2</div>
  <div class="st">Число слов: 403</div>
  <div class="st st3">
    <svg width="17" height="15" viewBox="0 0 17 15" class="me-3"><path d="M1 9l7-4 8 4-7 5z" fill="#cfe0f5" stroke="#3f6fb4"/><path d="M8 1l5 6M13 1L8 7" stroke="#e03020" stroke-width="2"/></svg><span>русский</span>
  </div>
  <div class="zm d-flex align-items-center ms-auto">
    <div class="vw on"><svg width="12" height="13" viewBox="0 0 12 13"><path d="M.5.500h11v12H.5z" fill="#fff" stroke="#555"/><path d="M2 3h8M2 5.500h8M2 8h8M2 10.500h8" stroke="#555"/></svg></div>
    <div class="vw"><svg width="12" height="13" viewBox="0 0 12 13"><path d="M.5 1.500L6 .5l5.500 1v11L6 12 .5 12.500z" fill="#f4f4f4" stroke="#777"/><path d="M6 1v11M2 4h3M2 6.500h3M7 4h3M7 6.500h3" stroke="#777"/></svg></div>
    <div class="vw"><svg width="14" height="13" viewBox="0 0 14 13"><path d="M.5.500h10v11H.5z" fill="#fff" stroke="#777"/><path d="M2 3h7M2 5.500h7M2 8h5" stroke="#777"/><circle cx="11" cy="10" r="3" fill="#3f8fd0"/></svg></div>
    <div class="vw"><svg width="12" height="11" viewBox="0 0 12 11"><path d="M0 1h12M3 4h9M3 7h9M0 10h12" stroke="#777" stroke-dasharray="2 1"/></svg></div>
    <div class="vw"><svg width="12" height="11" viewBox="0 0 12 11"><path d="M0 1h12M0 3.500h12M0 6h12M0 8.500h12M0 10.500h12" stroke="#666"/></svg></div>
    <span class="pct">96%</span>
    <div class="zbtn"></div>
    <div class="slider"><i></i></div>
    <div class="zbtn zplus"></div>
  </div>
</footer>

<nav class="taskbar d-flex align-items-center">
  <div class="orb"><svg width="38" height="38" viewBox="0 0 38 38"><defs><radialGradient id="og" cx=".5" cy=".35" r=".7"><stop offset="0" stop-color="#7ec3ea"/><stop offset=".6" stop-color="#1f6ba8"/><stop offset="1" stop-color="#0d2f52"/></radialGradient></defs><circle cx="19" cy="19" r="18" fill="url(#og)" stroke="#a9c8dd"/><path d="M9 13c3-1.500 6-1.500 9 0l-1 6c-3-1.500-6-1.500-9.500 0z" fill="#e8552c"/><path d="M19 13c3 1.500 7 1.500 10 0l-1.500 6c-3 1.500-6 1.500-9.500 0z" fill="#8cc63e"/><path d="M7.500 20c3-1.500 6-1.500 9 0l-1 6c-3-1.500-6-1.500-9.500 0z" fill="#3a9ae0"/><path d="M17.500 20c3 1.500 7 1.500 10 0L26 26c-3 1.500-7 1.500-10 0z" fill="#f8c820"/></svg></div>
  <div class="tk alice"><svg width="32" height="32" viewBox="0 0 32 32"><circle cx="16" cy="16" r="16" fill="#9b5af0"/><path d="M16 8c3 0 8 9 8 12 0 3-4 4-8 4s-8-1-8-4c0-3 5-12 8-12z" fill="#fff"/></svg></div>
  <div class="tk"><svg width="24" height="26"><use href="#tdoc"/></svg></div>
  <div class="tk"><svg width="24" height="26"><use href="#tdoc"/></svg></div>
  <div class="tk act tka"><svg width="24" height="26"><use href="#tdoc"/></svg></div>
  <div class="tk"><svg width="24" height="26"><use href="#tdoc"/></svg></div>
  <div class="tk"><svg width="24" height="26"><use href="#tdoc"/></svg></div>
  <div class="tk act tka"><svg width="24" height="26"><use href="#tdoc"/></svg></div>
  <div class="tk act tka"><svg width="30" height="32" viewBox="0 0 30 32"><defs><linearGradient id="ff" x1="0" y1="0" x2="1" y2="1"><stop offset="0" stop-color="#ffd23a"/><stop offset=".5" stop-color="#ff7a1f"/><stop offset="1" stop-color="#e8245a"/></linearGradient></defs><path d="M19 1c1 5 8 7 9 15 1 9-5 15-13 15S1 25 1 17c0-4 2-8 4-9 0 2 1 3 2 4 2-5 8-5 12-11z" fill="url(#ff)"/><circle cx="15" cy="18" r="7.500" fill="#6a3ac0"/><path d="M10 14c3-2 8-1 10 2-1 4-4 7-8 6 3-1 4-3 3-5-2 0-4-1-5-3z" fill="#f45a2a"/></svg></div>
  <div class="tk act tka"><svg width="24" height="26"><use href="#tdoc"/></svg></div>
  <div class="tray d-flex align-items-center">
    <span class="ru">RU</span>
    <svg width="10" height="5" class="up"><path d="M0 5l5-5 5 5z" fill="#fff"/></svg>
    <svg width="15" height="18" viewBox="0 0 15 18" class="me-2"><path d="M3 3h8v14H3z" fill="#222" stroke="#fff"/><path d="M4 9l6 7M10 9l-6 7" stroke="#e02020" stroke-width="2"/><path d="M11 4h3v3h-3" fill="#fff"/></svg>
    <svg width="17" height="17" viewBox="0 0 17 17" class="me-2"><path d="M1 6h3l4-4v13l-4-4H1z" fill="#eee"/><circle cx="12" cy="11" r="4.500" fill="#e02020"/><path d="M10 9l4 4M14 9l-4 4" stroke="#fff" stroke-width="1.400"/></svg>
    <svg width="16" height="17" viewBox="0 0 16 17" class="me-2"><rect x="5" y="3" width="10" height="10" fill="#1d3d5e" stroke="#fff" stroke-width="1.200"/><path d="M1 0h4v6H1zM3 6v10h9" fill="#fff" stroke="#fff"/></svg>
    <svg width="18" height="19" viewBox="0 0 18 19"><path d="M2 1v17" stroke="#fff" stroke-width="1.500"/><path d="M3 2c3-1 5 1 9 0v8c-4 1-6-1-9 0z" fill="#fff"/><circle cx="12" cy="13" r="4.500" fill="#e02020"/><path d="M10 11l4 4M14 11l-4 4" stroke="#fff" stroke-width="1.400"/></svg>
    <div class="clock ms-2"><div>8:51</div><div>04.03.2023</div></div>
    <div class="showd"></div>
  </div>
</nav>
<script src="https://cdn.jsdelivr.net/npm/bootstrap@5.3.0/dist/js/bootstrap.bundle.min.js"></script>
</body>
</html>
